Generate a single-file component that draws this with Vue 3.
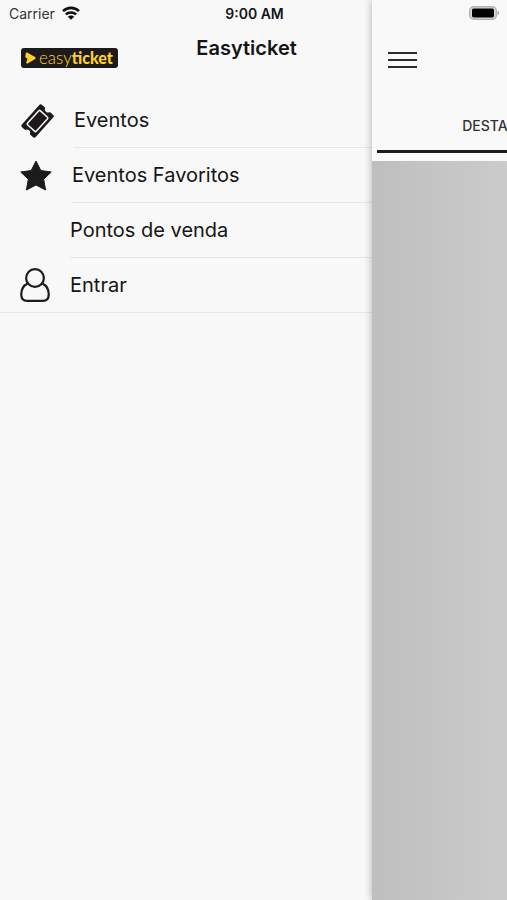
<script setup>
const items = [
  { label: 'Eventos', icon: 'ticket' },
  { label: 'Eventos Favoritos', icon: 'star' },
  { label: 'Pontos de venda', icon: 'none' },
  { label: 'Entrar', icon: 'person' },
]
</script>

<template>
  <div class="screen">
    <div class="status">
      <div class="carrier">
        <span>Carrier</span>
        <svg class="wifi" viewBox="0 0 18 14" aria-hidden="true">
          <path d="M1 5.1C5.6.8 12.4.8 17 5.1" fill="none" stroke="#111" stroke-width="2.6" />
          <path d="M3.8 8.4c3-2.7 7.4-2.7 10.4 0" fill="none" stroke="#111" stroke-width="2.5" />
          <path d="M9 13.8 5.800 10.700c1.700-1.700 4.700-1.700 6.400 0z" fill="#111" />
        </svg>
      </div>
      <div class="time">9:00 AM</div>
      <svg class="battery" viewBox="0 0 31 14" aria-hidden="true">
        <rect x=".7" y=".7" width="26.6" height="12.6" rx="4" fill="#d8d8d8" stroke="#b2b2b2" stroke-width="1.4" />
        <rect x="3" y="2.6" width="22" height="8.8" rx="1.6" fill="#000" />
        <path d="M28.6 4.6c2.2.8 2.2 4 0 4.8z" fill="#aaa" />
      </svg>
    </div>

    <aside class="drawer">
      <header class="drawer-head">
        <div class="logo">
          <svg class="logo-mark" viewBox="0 0 11 12" aria-hidden="true">
            <path d="M2 1.700 9.500 6 2.500 10.300 4 6.500 1.500 4.500z" fill="#fbd22d" stroke="#fbd22d" stroke-width="2.400" stroke-linejoin="round" />
          </svg>
          <span class="wordmark"><span class="thin">easy</span><b>ticket</b></span>
        </div>
        <h1>Easyticket</h1>
      </header>
      <nav>
        <a v-for="item in items" :key="item.label" href="#" class="item" :class="item.icon">
          <span class="icon">
            <svg v-if="item.icon === 'ticket'" viewBox="0 0 34 34" aria-hidden="true">
              <g transform="translate(17.500 17) rotate(-48)">
                <path d="M-13-9.300h26q2 0 2 2v4.200a3.200 3.200 0 0 0 0 6.200v4.200q0 2-2 2h-26q-2 0-2-2v-4.200a3.200 3.200 0 0 0 0-6.200v-4.200q0-2 2-2z" fill="#1c1a1b" />
                <rect x="-9.500" y="-5.900" width="19" height="11.800" rx="1" fill="none" stroke="#f8f8f8" stroke-width="1.500" />
              </g>
            </svg>
            <svg v-else-if="item.icon === 'star'" viewBox="0 0 32 32" aria-hidden="true">
              <path d="m16 1 4.800 9.500 10.400 1.500-7.500 7.300 1.900 10.700L16 25l-9.600 5 1.900-10.700L.8 12l10.400-1.500z" fill="#1c1a1b" stroke="#1c1a1b" stroke-linejoin="round" />
            </svg>
            <svg v-else-if="item.icon === 'person'" viewBox="0 0 30 34" aria-hidden="true">
              <g fill="none" stroke="#1c1a1b" stroke-width="2.200">
                <circle cx="15" cy="10" r="8.900" />
                <path d="M7.600 15.500C3.600 17.500 1.300 21 1.300 26v1q0 5.900 5.900 5.900h15.600q5.900 0 5.900-5.900v-1c0-5-2.300-8.500-6.300-10.500" />
              </g>
            </svg>
          </span>
          <span class="label">{{ item.label }}</span>
        </a>
      </nav>
    </aside>

    <main class="page">
      <div class="toolbar">
        <button class="menu" type="button" aria-label="Menu">
          <span></span><span></span><span></span>
        </button>
      </div>
      <div class="tabs">
        <button class="tab" type="button">DESTAQUES</button>
      </div>
      <div class="content"></div>
    </main>
  </div>
</template>

<style>
body {
  background: #f8f8f8;
}
</style>

<style scoped>
.screen {
  display: grid;
  grid-template-columns: 73.4% minmax(0, 1fr);
  grid-template-rows: 26px 1fr;
  min-height: 100vh;
  overflow: hidden;
  background: #f8f8f8;
  color: #151515;
  font-family: Inter, "Liberation Sans", sans-serif;
}
.status {
  grid-area: 1 / 1 / 2 / 3;
  z-index: 2;
  display: grid;
  grid-template-columns: 1fr auto 1fr;
  align-items: center;
  padding: 0 7px;
  padding-left: 9px;
  font-size: 14px;
}
.carrier {
  display: flex;
  align-items: center;
  gap: 7px;
  color: #333;
}
.wifi {
  width: 18px;
  height: 14px;
}
.time {
  font-weight: 600;
}
.battery {
  justify-self: end;
  width: 31px;
  height: 14px;
}
.drawer {
  grid-area: 1 / 1 / 3 / 2;
  padding-top: 28px;
}
.drawer-head {
  display: grid;
  grid-template-columns: 97px 1fr;
  gap: 3px;
  height: 65px;
  padding-left: 21px;
}
.logo {
  display: flex;
  align-items: center;
  gap: 3px;
  box-sizing: border-box;
  height: 20px;
  margin-top: 20px;
  padding-left: 4px;
  border-radius: 3px;
  background: #1e1a1b;
  color: #fbd22d;
}
.logo-mark {
  flex: none;
  width: 11px;
  height: 12px;
}
.wordmark {
  font-family: Lato, sans-serif;
  font-size: 16px;
  line-height: 18px;
  white-space: nowrap;
}
.thin {
  font-size: 17px;
  font-weight: 300;
}
.wordmark b {
  font-weight: 900;
}
h1 {
  margin: 6px 0 0;
  text-align: center;
  font-size: 20px;
  line-height: 28px;
  font-weight: 600;
}
.item {
  display: flex;
  align-items: center;
  gap: 20px;
  box-sizing: border-box;
  height: 55px;
  padding-left: 20px;
  color: #151515;
  text-decoration: none;
  font-size: 20px;
}
.icon {
  display: flex;
  width: 30px;
}
.icon svg {
  width: 100%;
}
.ticket .icon {
  width: 34px;
}
.star .icon {
  width: 32px;
}
.label {
  flex: 1;
  box-sizing: border-box;
  height: 55px;
  line-height: 55px;
  border-bottom: 1px solid #e6e6e6;
}
.item:last-child {
  border-bottom: 1px solid #e6e6e6;
}
.item:last-child .label {
  border-bottom: 0;
}
.page {
  grid-area: 1 / 2 / 3 / 3;
  display: flex;
  flex-direction: column;
  padding-top: 28px;
  background: #f9f9f9;
  box-shadow: 0 0 8px rgba(0, 0, 0, 0.3);
}
button {
  border: 0;
  background: none;
  font-family: inherit;
}
.toolbar {
  display: flex;
  align-items: center;
  height: 64px;
  padding-left: 16px;
}
.menu {
  display: flex;
  flex-direction: column;
  gap: 5px;
  width: 29px;
  padding: 0;
}
.menu span {
  height: 2px;
  background: #2b2b2b;
}
.tabs {
  display: flex;
  height: 58px;
  margin: 0 0 8px 5px;
  border-bottom: 3px solid #1e1b1c;
  overflow: hidden;
}
.tab {
  flex: none;
  padding: 8px 0 0 85px;
  color: #333;
  font-size: 14px;
  font-weight: 500;
}
.content {
  flex: 1;
  background: linear-gradient(90deg, #bfbfbf, #cbcbcb);
}
</style>
